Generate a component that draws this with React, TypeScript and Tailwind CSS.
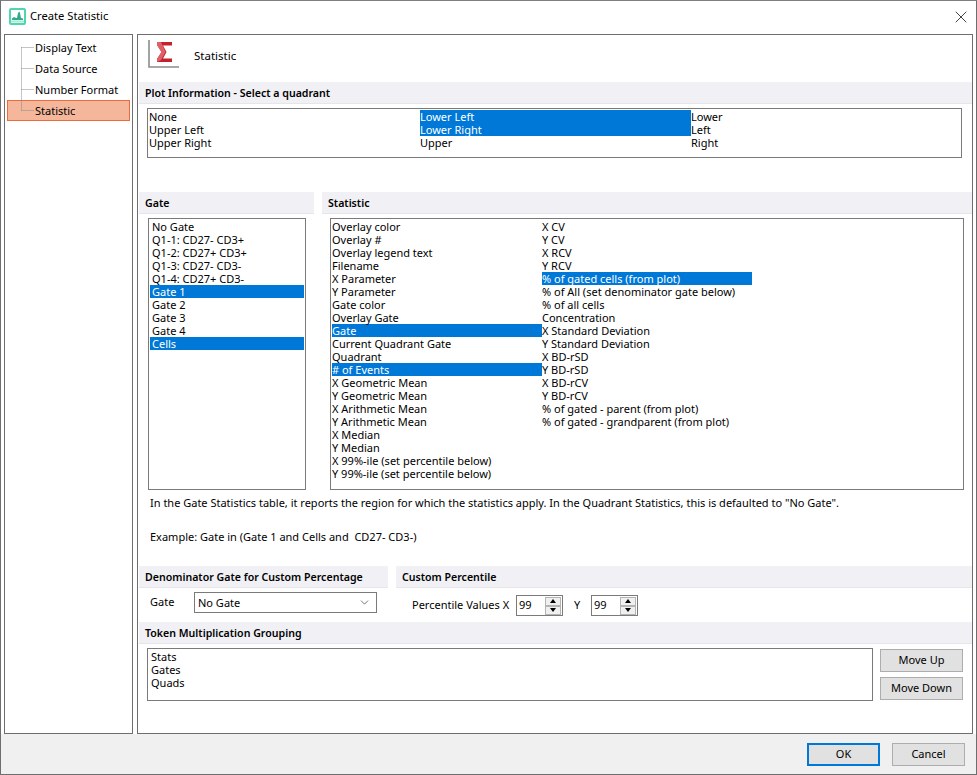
import { ChevronDown, X } from "lucide-react";

const treeItems = ["Display Text", "Data Source", "Number Format", "Statistic"];
const quadrants = ["None", "Upper Left", "Upper Right", "Lower Left", "Lower Right", "Upper", "Lower", "Left", "Right"];
const gates = ["No Gate", "Q1-1: CD27- CD3+", "Q1-2: CD27+ CD3+", "Q1-3: CD27- CD3-", "Q1-4: CD27+ CD3-", "Gate 1", "Gate 2", "Gate 3", "Gate 4", "Cells"];
const statsLeft = [
  "Overlay color", "Overlay #", "Overlay legend text", "Filename", "X Parameter", "Y Parameter", "Gate color", "Overlay Gate", "Gate",
  "Current Quadrant Gate", "Quadrant", "# of Events", "X Geometric Mean", "Y Geometric Mean", "X Arithmetic Mean", "Y Arithmetic Mean",
  "X Median", "Y Median", "X 99%-ile (set percentile below)", "Y 99%-ile (set percentile below)",
];
const statsRight = [
  "X CV", "Y CV", "X RCV", "Y RCV", "% of gated cells (from plot)", "% of All (set denominator gate below)", "% of all cells", "Concentration",
  "X Standard Deviation", "Y Standard Deviation", "X BD-rSD", "Y BD-rSD", "X BD-rCV", "Y BD-rCV", "% of gated - parent (from plot)", "% of gated - grandparent (from plot)",
];

const ListRow = ({ text, selected }: { text: string; selected?: boolean }) => (
  <div className={`h-[13px] leading-[13px] whitespace-nowrap ${selected ? "bg-[#0078d7] text-white" : ""}`}>{text}</div>
);

const SectionHeader = ({ title, className = "" }: { title: string; className?: string }) => (
  <div className={`h-[22px] bg-[#f0f0f5] border-b border-[#e6e6ea] pl-[6px] text-[10.6px] font-semibold leading-[22px] whitespace-nowrap ${className}`}>{title}</div>
);

const Spinner = () => (
  <div className="w-[47px] h-[21px] border border-[#7a7a7a] bg-white flex items-center justify-between pl-[2px] pr-px">
    <span>99</span>
    <div className="flex flex-col">
      <div className="w-[16px] h-[9px] bg-[#f0f0f0] border border-[#b4b4b4] flex items-center justify-center">
        <div className="w-0 h-0 border-x-[3.5px] border-x-transparent border-b-[4px] border-b-black" />
      </div>
      <div className="w-[16px] h-[9px] bg-[#f0f0f0] border border-[#b4b4b4] flex items-center justify-center">
        <div className="w-0 h-0 border-x-[3.5px] border-x-transparent border-t-[4px] border-t-black" />
      </div>
    </div>
  </div>
);

const DialogButton = ({ label, className = "" }: { label: string; className?: string }) => (
  <button className={`bg-[#e1e1e1] border border-[#adadad] text-center ${className}`}>{label}</button>
);

export default function App() {
  return (
    <div className="w-[977px] h-[775px] overflow-hidden border border-[#6e6e6e] border-t-[#7f7f7f] bg-white flex flex-col text-[11px] text-[#000] font-['Noto_Sans','Open_Sans',sans-serif]">
      {/* Title bar */}
      <div className="h-[33px] shrink-0 flex items-center pl-[8px] pr-[5px] pb-[2px]">
        <svg width="17" height="17" viewBox="0 0 17 17" fill="none">
          <rect x="1" y="1" width="15" height="15" rx="1" stroke="#4fd6ae" strokeWidth="2" />
          <path d="M3 12 V10.5 L5 9 L7 10 L8 10 L9 5 L10.5 3.5 L11 5 L12 10 L14 10.5 V12 Z" fill="#35a98c" />
          <rect x="2" y="12.5" width="13" height="2" fill="#a5ecd7" />
        </svg>
        <span className="ml-[4px] text-[11.2px]">Create Statistic</span>
        <X className="ml-auto" size={20} strokeWidth={0.9} />
      </div>

      {/* Body */}
      <div className="flex h-[700px] shrink-0 pl-[3px] pr-[3px] gap-[4px]">
        {/* Tree */}
        <div className="relative w-[129px] shrink-0 border border-[#6e6e6e] pt-[2px] px-[2px]">
          <svg className="absolute left-[16px] top-[10px]" width="16" height="68" fill="none">
            <path d="M0.5 2.5 H13 M0.5 23.5 H13 M0.5 44.5 H13 M0.5 65.5 H13 M0.5 2.5 V65.5" stroke="#8a8a8a" strokeDasharray="1 1" />
          </svg>
          {treeItems.map((item) => (
            <div
              key={item}
              className={`h-[21px] leading-[19px] pl-[27px] border ${item === "Statistic" ? "bg-[#f4b79b] border-[#ee6a3a]" : "border-transparent"}`}
            >
              {item}
            </div>
          ))}
        </div>

        {/* Main panel */}
        <div className="flex-1 min-w-0 border border-[#6e6e6e] flex flex-col pl-[1px]">
          <div className="h-[47px] shrink-0 flex items-start pl-[9px] pt-[5px]">
            <svg width="31" height="29" viewBox="0 0 31 29" fill="none">
              <path d="M1 0 V27 H31" stroke="#8c8c8c" strokeWidth="1.6" />
              <path d="M9 2 H24 V5.5 H15 L18.5 12 L15 18.5 H24 V22 H9 V19 L13.5 12 L9 5 Z" fill="#c4202e" />
              <path d="M9 2 H13 L17.5 12 L13 20 L9 22 V19 L13.5 12 L9 5 Z" fill="#e0606a" />
            </svg>
            <span className="ml-[15px] mt-[8px] text-[11.5px] leading-[16px]">Statistic</span>
          </div>

          <SectionHeader title="Plot Information - Select a quadrant" />
          <div className="ml-[8px] mr-[10px] mt-[4px] h-[50px] border border-[#7a7a7a] p-px grid grid-flow-col grid-rows-[repeat(3,13px)] grid-cols-[271px_271px_271px]">
            {quadrants.map((q) => (
              <ListRow key={q} text={q} selected={q === "Lower Left" || q === "Lower Right"} />
            ))}
          </div>

          <div className="flex gap-[8px] mt-[34px]">
            <SectionHeader title="Gate" className="w-[175px] shrink-0" />
            <SectionHeader title="Statistic" className="flex-1" />
          </div>

          <div className="flex mt-[4px]">
            <div className="ml-[9px] w-[158px] h-[272px] border border-[#7a7a7a] pt-px px-px">
              {gates.map((g) => (
                <div key={g} className={`h-[13px] leading-[13px] pl-[2px] ${g === "Gate 1" || g === "Cells" ? "bg-[#0078d7] text-white" : ""}`}>
                  {g}
                </div>
              ))}
            </div>
            <div className="ml-[24px] w-[634px] h-[272px] border border-[#7a7a7a] pt-px px-px flex">
              <div className="w-[210px]">
                {statsLeft.map((s) => (
                  <ListRow key={s} text={s} selected={s === "Gate" || s === "# of Events"} />
                ))}
              </div>
              <div className="w-[210px]">
                {statsRight.map((s) => (
                  <ListRow key={s} text={s} selected={s === "% of gated cells (from plot)"} />
                ))}
              </div>
            </div>
          </div>

          <p className="mt-[6px] ml-[11px] h-[13px] leading-[13px] whitespace-nowrap">
            In the Gate Statistics table, it reports the region for which the statistics apply. In the Quadrant Statistics, this is defaulted to "No Gate".
          </p>
          <p className="mt-[21px] ml-[11px] h-[13px] leading-[13px] whitespace-pre">Example: Gate in (Gate 1 and Cells and  CD27- CD3-)</p>

          <div className="flex gap-[8px] mt-[23px]">
            <SectionHeader title="Denominator Gate for Custom Percentage" className="w-[249px] shrink-0" />
            <SectionHeader title="Custom Percentile" className="flex-1" />
          </div>
          <div className="flex h-[34px]">
            <div className="w-[257px] shrink-0 flex items-start pl-[11px] pt-[4px]">
              <span className="w-[44px] leading-[20px]">Gate</span>
              <div className="w-[183px] h-[21px] border border-[#7a7a7a] flex items-center justify-between pl-[3px] pr-[5px]">
                <span className="mt-px">No Gate</span>
                <ChevronDown size={13} strokeWidth={1} />
              </div>
            </div>
            <div className="flex items-start pl-[16px] pt-[7px]">
              <span className="w-[104px] leading-[19px]">Percentile Values X</span>
              <Spinner />
              <span className="ml-[11px] w-[17px] leading-[19px]">Y</span>
              <Spinner />
            </div>
          </div>

          <SectionHeader title="Token Multiplication Grouping" />
          <div className="flex mt-[4px] pl-[8px]">
            <div className="w-[726px] h-[53px] border border-[#7a7a7a] pl-[3px] pt-px">
              <ListRow text="Stats" />
              <ListRow text="Gates" />
              <ListRow text="Quads" />
            </div>
            <div className="ml-[7px] flex flex-col gap-[5px] pt-px">
              <DialogButton label="Move Up" className="w-[83px] h-[23px]" />
              <DialogButton label="Move Down" className="w-[83px] h-[23px]" />
            </div>
          </div>
        </div>
      </div>

      {/* Footer */}
      <div className="flex-1 bg-[#f0f0f0] flex justify-end items-start pt-[9px] pr-[11px] gap-[12px]">
        <DialogButton label="OK" className="w-[73px] h-[23px] border-2 !border-[#0078d7]" />
        <DialogButton label="Cancel" className="w-[73px] h-[23px]" />
      </div>
    </div>
  );
}
